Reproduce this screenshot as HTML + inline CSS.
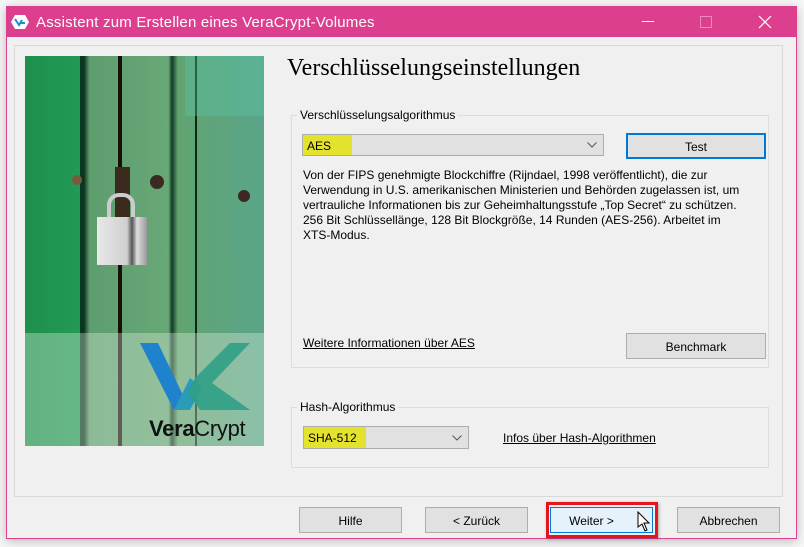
<!DOCTYPE html>
<html><head><meta charset="utf-8"><style>
*{margin:0;padding:0;box-sizing:border-box}
body{width:804px;height:547px;background:#f7f7f7;position:relative;overflow:hidden;font-family:"Liberation Sans",sans-serif;font-size:12px;color:#000}
.abs{position:absolute}
.win{left:6px;top:6px;width:791px;height:533px;background:#f0f0f0;border:1px solid #e0408f;box-shadow:0 2px 10px rgba(0,0,0,.25)}
.title{left:6px;top:6px;width:791px;height:31px;background:#dc3f8d;color:#fff;font-size:15px}
.frame{border:1px solid #d9d9d9}
.grp{border:1px solid #dcdcdc}
.legend{background:#f0f0f0;padding:0 3px;font-size:12px;color:#000}
.btn{background:#e1e1e1;border:1px solid #adadad;text-align:center;font-size:12px}
.combo{background:#e1e1e1;border:1px solid #adadad}
.hl{background:#e3e32e;height:20px;top:0;left:0;padding:4px 0 0 4px}
.link{text-decoration:underline}
</style></head><body>
<div class="abs win"></div>
<div class="abs title">
  <svg class="abs" style="left:5px;top:8px" width="18" height="16" viewBox="0 0 18 16"><polygon points="4,1 14,1 18,8 14,15 4,15 0,8" fill="#fff"/><path d="M4 5 L8 11 L11 6 M9 9 L14 9" stroke="#1b8fd0" stroke-width="2" fill="none"/></svg>
  <span class="abs" style="left:30px;top:8px;letter-spacing:.2px">Assistent zum Erstellen eines VeraCrypt-Volumes</span>
  <div class="abs" style="left:636px;top:15px;width:12px;height:1px;background:#fff"></div>
  <div class="abs" style="left:694px;top:10px;width:12px;height:12px;border:1px solid #ee8abb"></div>
  <svg class="abs" style="left:752px;top:9px" width="14" height="14"><path d="M1 1L13 13M13 1L1 13" stroke="#fff" stroke-width="1.2"/></svg>
</div>
<div class="abs frame" style="left:14px;top:45px;width:769px;height:452px"></div>
<!-- image -->
<div class="abs" style="left:25px;top:56px;width:239px;height:390px;overflow:hidden;background:linear-gradient(90deg,#1f8f4e 0,#229a55 23%,#0a2a18 24.5%,#5e9d6e 27%,#68a877 60%,#0f3a22 61.5%,#62a470 64%,#5aa58a 100%)">
  <div class="abs" style="left:55px;top:0;width:3px;height:390px;background:#063a20"></div>
  <div class="abs" style="left:93px;top:0;width:4px;height:390px;background:#1a0f08"></div>
  <div class="abs" style="left:170px;top:0;width:2px;height:390px;background:#0a2a18"></div>
  <div class="abs" style="left:160px;top:0;width:79px;height:60px;background:rgba(90,200,170,.35)"></div>
  <div class="abs" style="left:90px;top:111px;width:15px;height:50px;background:#3b2a1e"></div>
  <div class="abs" style="left:82px;top:137px;width:28px;height:36px;border:4px solid #ccc;border-bottom:none;border-radius:12px 12px 0 0"></div>
  <div class="abs" style="left:72px;top:161px;width:50px;height:48px;background:linear-gradient(90deg,#e8e8e8,#d0d0d0 60%,#555 70%,#ddd 80%,#999)"></div>
  <div class="abs" style="left:47px;top:119px;width:10px;height:10px;border-radius:5px;background:#7a5a3a"></div>
  <div class="abs" style="left:125px;top:119px;width:14px;height:14px;border-radius:7px;background:#3b2a22"></div>
  <div class="abs" style="left:213px;top:134px;width:12px;height:12px;border-radius:6px;background:#3b2a22"></div>
  <div class="abs" style="left:0;top:277px;width:239px;height:113px;background:rgba(230,240,225,.35)"></div>
  <svg class="abs" style="left:115px;top:287px" width="115" height="70"><polygon points="0,0 18,0 50,67 34,67" fill="#1e82cc"/><polygon points="34,67 50,67 62,45 50,35" fill="#2a9bb8"/><polygon points="55,35 90,0 110,0 72,40 110,67 60,67 48,50" fill="#2fa086" opacity=".9"/></svg>
  <div class="abs" style="left:124px;top:360px;font-size:22px;color:#111;letter-spacing:-.3px"><b>Vera</b>Crypt</div>
</div>
<div class="abs" style="left:287px;top:55px;font-family:'Liberation Serif',serif;font-size:24px">Verschlüsselungseinstellungen</div>
<!-- group 1 -->
<div class="abs grp" style="left:291px;top:115px;width:478px;height:253px"></div>
<div class="abs legend" style="left:297px;top:108px">Verschlüsselungsalgorithmus</div>
<div class="abs combo" style="left:302px;top:134px;width:302px;height:22px"><div class="abs hl" style="width:49px">AES</div>
<svg class="abs" style="right:6px;top:7px" width="10" height="6"><path d="M0.5 0.5L5 5L9.5 0.5" stroke="#555" fill="none"/></svg></div>
<div class="abs btn" style="left:626px;top:133px;width:140px;height:26px;border:2px solid #0078d7;padding-top:5px">Test</div>
<div class="abs" style="left:303px;top:168px;line-height:15px;width:470px">Von der FIPS genehmigte Blockchiffre (Rijndael, 1998 veröffentlicht), die zur<br>Verwendung in U.S. amerikanischen Ministerien und Behörden zugelassen ist, um<br>vertrauliche Informationen bis zur Geheimhaltungsstufe „Top Secret“ zu schützen.<br>256 Bit Schlüssellänge, 128 Bit Blockgröße, 14 Runden (AES-256). Arbeitet im<br>XTS-Modus.</div>
<div class="abs link" style="left:303px;top:336px">Weitere Informationen über AES</div>
<div class="abs btn" style="left:626px;top:333px;width:140px;height:26px;padding-top:6px">Benchmark</div>
<!-- group 2 -->
<div class="abs grp" style="left:291px;top:407px;width:478px;height:61px"></div>
<div class="abs legend" style="left:297px;top:400px">Hash-Algorithmus</div>
<div class="abs combo" style="left:303px;top:426px;width:166px;height:23px"><div class="abs hl" style="width:62px;height:21px">SHA-512</div>
<svg class="abs" style="right:6px;top:8px" width="10" height="6"><path d="M0.5 0.5L5 5L9.5 0.5" stroke="#555" fill="none"/></svg></div>
<div class="abs link" style="left:503px;top:431px">Infos über Hash-Algorithmen</div>
<!-- bottom buttons -->
<div class="abs btn" style="left:299px;top:507px;width:103px;height:26px;padding-top:6px">Hilfe</div>
<div class="abs btn" style="left:425px;top:507px;width:103px;height:26px;padding-top:6px">&lt; Zurück</div>
<div class="abs" style="left:546px;top:502px;width:112px;height:36px;border:3px solid #e5141d;box-shadow:1px 1px 3px rgba(0,0,0,.3)"></div>
<div class="abs btn" style="left:550px;top:507px;width:103px;height:26px;padding-top:6px;background:#e5f1fb;border-color:#0078d7;padding-right:20px;padding-left:0">Weiter &gt;</div>
<svg class="abs" style="left:637px;top:511px" width="14" height="22"><path d="M1 1L1 16L5 13L8 20L10 19L7 12L12 12Z" fill="#fff" stroke="#000" stroke-width="1"/></svg>
<div class="abs btn" style="left:677px;top:507px;width:103px;height:26px;padding-top:6px">Abbrechen</div>
</body></html>
